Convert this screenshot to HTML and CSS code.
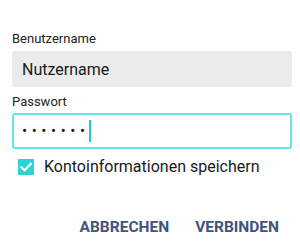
FILE: index.html
```html
<!DOCTYPE html>
<html lang="de">
<head>
    <meta charset="UTF-8">
    <meta name="viewport" content="width=device-width, initial-scale=1.0">
    <title>Verbinden</title>
    <link rel="stylesheet" href="styles.css">
</head>
<body>
    <div class="dialog">
        <div class="form-group">
            <label class="field-label">Benutzername</label>
            <div class="field field-filled">Nutzername</div>
        </div>
        <div class="form-group">
            <label class="field-label">Passwort</label>
            <div class="field field-focus">
                <span class="dots">&bull;&bull;&bull;&bull;&bull;&bull;&bull;</span><span class="caret"></span>
            </div>
        </div>
        <div class="check-row">
            <span class="checkbox">
                <svg width="16" height="16" viewBox="0 0 16 16">
                    <path d="M3.3 8.2 L6.5 11.2 L12.8 4.9" fill="none" stroke="#fff" stroke-width="2.2" stroke-linecap="square"/>
                </svg>
            </span>
            <span class="check-label">Kontoinformationen speichern</span>
        </div>
        <div class="actions">
            <button class="btn">ABBRECHEN</button>
            <button class="btn">VERBINDEN</button>
        </div>
    </div>
</body>
</html>
```

FILE: styles.css
```css
body {
    margin: 0;
    font-family: Roboto, "Noto Sans", Arial, sans-serif;
    background: #fff;
    color: #222;
}
.dialog {
    padding: 31px 8px 0 12px;
}
.form-group {
    margin-bottom: 7px;
}
.field-label {
    display: block;
    font-size: 13px;
    line-height: 16px;
    color: #222;
    margin-bottom: 4px;
}
.form-group + .form-group .field-label {
    margin-bottom: 3px;
}
.field {
    box-sizing: border-box;
    height: 36px;
    border-radius: 3px;
    padding: 0 10px;
    display: flex;
    align-items: center;
    font-size: 16px;
}
.field-filled {
    background: #ebebeb;
    color: #1a1a1a;
}
.field-focus {
    border: 2px solid #62e6e8;
    padding-left: 8px;
}
.dots {
    letter-spacing: 4.6px;
    font-size: 15px;
    color: #111;
}
.caret {
    width: 2px;
    height: 22px;
    margin-left: -1px;
    background: #22c9cc;
}
.check-row {
    display: flex;
    align-items: center;
    margin-top: 8px;
    padding-left: 6px;
}
.checkbox {
    width: 16px;
    height: 16px;
    border-radius: 1px;
    background: #2bd3d6;
    display: flex;
}
.check-label {
    font-size: 16px;
    margin-left: 10px;
    color: #1a1a1a;
}
.actions {
    display: flex;
    justify-content: flex-end;
    gap: 26px;
    margin-top: 42px;
    padding-right: 13px;
}
.btn {
    border: none;
    background: none;
    padding: 0;
    font-family: inherit;
    font-weight: bold;
    font-size: 15.5px;
    line-height: 18px;
    color: #3d5580;
    cursor: pointer;
}
```
